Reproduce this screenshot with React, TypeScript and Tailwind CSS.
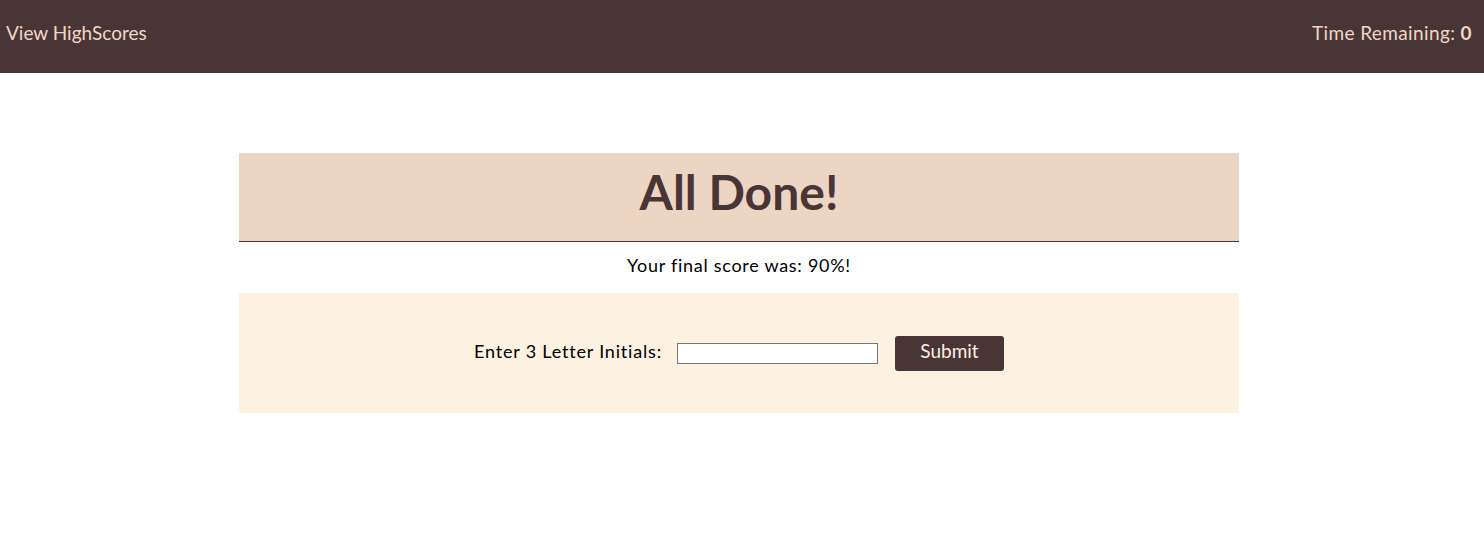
import { useState } from 'react';

/** Top bar with highscores link and timer */
function Header({ time }: { time: number }) {
  return (
    <header className="h-[73px] px-[6px] bg-[#493536] flex items-center justify-between text-[#f0d6c6] text-[19px]">
      <a href="#" className="pb-[6px]">View HighScores</a>
      <div className="pb-[6px] pr-[6px] tracking-[0.02em]">
        Time Remaining: <span className="font-bold">{time}</span>
      </div>
    </header>
  );
}

export default function App() {
  const [initials, setInitials] = useState('');

  return (
    <div className="min-h-screen bg-white text-black" style={{ fontFamily: 'Lato, "Open Sans", sans-serif' }}>
      <Header time={0} />

      <main className="pt-[80px] pr-[6px] flex justify-center">
        <section className="w-[1000px]">
          <div className="h-[89px] bg-[#edd5c4] border-b border-[#493536] flex items-center justify-center">
            <h1 className="text-[48px] font-bold text-[#493536] leading-none pb-[10px]">All Done!</h1>
          </div>

          <p className="h-[51px] flex items-center justify-center text-[18px] tracking-[0.04em] pb-[4px]">
            Your final score was: 90%!
          </p>

          <form
            className="h-[120px] bg-[#fdf1e1] flex items-center justify-center"
            onSubmit={e => e.preventDefault()}
          >
            <label className="text-[18px] tracking-[0.045em] mr-[15px] pb-[4px]">Enter 3 Letter Initials:</label>
            <input
              value={initials}
              onChange={e => setInitials(e.target.value)}
              maxLength={3}
              className="w-[201px] h-[21px] bg-white border border-[#767676] mr-[17px]"
            />
            <button
              type="submit"
              className="w-[109px] h-[35px] rounded-[3px] bg-[#493536] text-[#fdf1e1] text-[19px] pb-[4px]"
            >
              Submit
            </button>
          </form>
        </section>
      </main>
    </div>
  );
}
